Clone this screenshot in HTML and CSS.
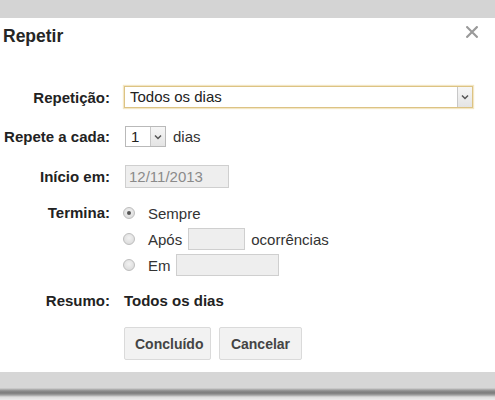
FILE: index.html
```html
<!DOCTYPE html>
<html lang="pt">
<head>
<meta charset="utf-8">
<link rel="stylesheet" href="styles.css">
</head>
<body>
<div class="topband"></div>
<div class="dialog">
  <div class="header">
    <div class="title">Repetir</div>
    <svg class="close" width="12" height="12" viewBox="0 0 12 12"><path d="M1.2 1.2 L10.8 10.8 M10.8 1.2 L1.2 10.8" stroke="#9a9a9a" stroke-width="2.2" stroke-linecap="square"/></svg>
  </div>
  <div class="form">
    <div class="row r1">
      <div class="label">Repetição:</div>
      <div class="select wide focus">
        <span class="sel-text">Todos os dias</span>
        <span class="arrow"><svg width="8" height="6" viewBox="0 0 8 6"><path d="M1 1.5 L4 4.5 L7 1.5" fill="none" stroke="#555" stroke-width="1.5"/></svg></span>
      </div>
    </div>
    <div class="row r2">
      <div class="label">Repete a cada:</div>
      <div class="select small">
        <span class="sel-text">1</span>
        <span class="arrow"><svg width="8" height="6" viewBox="0 0 8 6"><path d="M1 1.5 L4 4.5 L7 1.5" fill="none" stroke="#555" stroke-width="1.5"/></svg></span>
      </div>
      <span class="after">dias</span>
    </div>
    <div class="row r3">
      <div class="label">Início em:</div>
      <div class="input date">12/11/2013</div>
    </div>
    <div class="row r4">
      <div class="label top">Termina:</div>
      <div class="options">
        <div class="opt"><span class="radio checked"></span><span>Sempre</span></div>
        <div class="opt"><span class="radio"></span><span>Após</span><span class="input count"></span><span>ocorrências</span></div>
        <div class="opt"><span class="radio"></span><span>Em</span><span class="input until"></span></div>
      </div>
    </div>
    <div class="row r5">
      <div class="label">Resumo:</div>
      <div class="summary">Todos os dias</div>
    </div>
    <div class="row r6">
      <div class="label"></div>
      <div class="buttons">
        <button class="btn btn-done">Concluído</button>
        <button class="btn btn-cancel">Cancelar</button>
      </div>
    </div>
  </div>
</div>
<div class="bottomband"></div>
</body>
</html>
```
FILE: styles.css
```css
html, body {
  margin: 0;
  padding: 0;
  background: #ffffff;
  width: 495px;
  height: 400px;
  overflow: hidden;
  font-family: "Liberation Sans", Arial, sans-serif;
  color: #222;
}
.topband {
  height: 18px;
  background: #d4d4d4;
}
.dialog {
  height: 354px;
  background: #fff;
  box-sizing: border-box;
  padding-top: 8px;
}
.header {
  display: flex;
  justify-content: space-between;
  align-items: flex-start;
  height: 20px;
  padding-left: 3px;
  padding-right: 17px;
}
.title {
  font-size: 17.5px;
  font-weight: bold;
  line-height: 20px;
  color: #262626;
}
.close {
  margin-top: 0px;
}
.form {
  padding-top: 40px;
  font-size: 15px;
}
.row {
  display: flex;
  align-items: center;
}
.label {
  width: 110px;
  margin-right: 14px;
  text-align: right;
  font-weight: bold;
  flex: none;
  color: #222;
}
.label.top {
  align-self: flex-start;
  line-height: 22px;
}
.r1 { height: 22px; }
.r2 { height: 21px; margin-top: 18px; }
.r3 { height: 23px; margin-top: 18px; }
.r4 { margin-top: 14px; align-items: flex-start; }
.r5 { height: 22px; margin-top: 13px; }
.r6 { margin-top: 16px; }

.select {
  box-sizing: border-box;
  display: flex;
  align-items: center;
  justify-content: space-between;
  background: #fff;
  border: 1px solid #b9b9b9;
  padding-left: 5px;
}
.select.wide {
  width: 349px;
  height: 22px;
}
.select.focus {
  border-color: #dcc384;
  box-shadow: 0 0 1px 1px #f3e6c4;
}
.select.small {
  width: 41px;
  height: 21px;
  margin-left: 1px;
}
.sel-text {
  color: #222;
  line-height: 18px;
}
.arrow {
  box-sizing: border-box;
  width: 15px;
  height: 100%;
  display: flex;
  align-items: center;
  justify-content: center;
  background: linear-gradient(#f6f6f6, #e4e4e4);
  border-left: 1px solid #c8c8c8;
}
.after {
  margin-left: 7px;
  color: #333;
}
.input {
  box-sizing: border-box;
  display: inline-block;
  background: #eeeeee;
  border: 1px solid #cfcfcf;
}
.input.date {
  width: 104px;
  height: 23px;
  line-height: 21px;
  padding-left: 3px;
  color: #8a8a8a;
  margin-left: 1px;
}
.options {
  display: flex;
  flex-direction: column;
  gap: 4px;
  color: #333;
}
.opt {
  display: flex;
  align-items: center;
  height: 22px;
}
.radio {
  box-sizing: border-box;
  width: 12px;
  height: 12px;
  border-radius: 50%;
  border: 1px solid #bdbdbd;
  background: radial-gradient(circle at 50% 40%, #f2f2f2, #d6d6d6);
  margin-right: 13px;
  margin-left: -1px;
  display: flex;
  align-items: center;
  justify-content: center;
}
.radio.checked::after {
  content: "";
  width: 4px;
  height: 4px;
  border-radius: 50%;
  background: #555;
}
.input.count {
  width: 57px;
  height: 22px;
  margin: 0 6px 0 6px;
}
.input.until {
  width: 103px;
  height: 22px;
  margin-left: 5px;
}
.summary {
  font-weight: bold;
  color: #222;
}
.buttons {
  display: flex;
  gap: 8px;
}
.btn {
  box-sizing: border-box;
  height: 33px;
  padding: 0 10px;
  background: #f2f2f2;
  border: 1px solid #dadada;
  border-radius: 2px;
  font-family: "Liberation Sans", Arial, sans-serif;
  font-size: 14px;
  font-weight: bold;
  color: #444;
}
.btn-done { width: 87px; }
.btn-cancel { width: 83px; }
.bottomband {
  height: 28px;
  background: linear-gradient(#d6d6d6 0px, #d6d6d6 16px, #b8b8b8 17px, #8a8a8a 19px, #7c7c7c 21px, #a0a0a0 23px, #dcdcdc 25px, #ececec 28px);
}
```
